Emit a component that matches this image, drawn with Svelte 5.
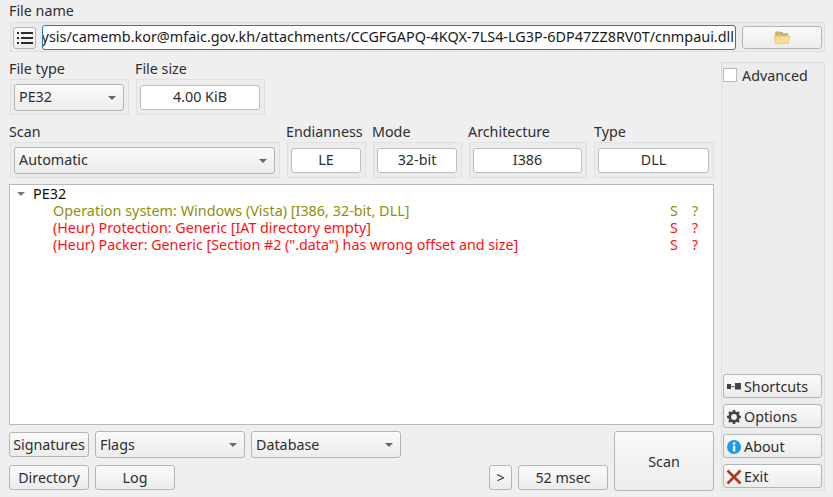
<script>
	const results = [
		{ text: 'Operation system: Windows (Vista) [I386, 32-bit, DLL]', kind: 'os' },
		{ text: '(Heur) Protection: Generic [IAT directory empty]', kind: 'heur' },
		{ text: '(Heur) Packer: Generic [Section #2 (".data") has wrong offset and size]', kind: 'heur' }
	];
	const infoFields = [
		{ label: 'Endianness', value: 'LE', cls: 'endian' },
		{ label: 'Mode', value: '32-bit', cls: 'mode' },
		{ label: 'Architecture', value: 'I386', cls: 'arch' },
		{ label: 'Type', value: 'DLL', cls: 'type' }
	];
</script>

<div class="window">
	<div class="label first">File name</div>
	<div class="group file-row">
		<button class="btn list-btn" aria-label="Menu">
			<svg width="16" height="14" viewBox="0 0 16 14">
				<g fill="#2a2a2a">
					<rect x="0" y="1" width="2" height="2" />
					<rect x="4" y="1" width="12" height="2" />
					<rect x="0" y="6" width="2" height="2" />
					<rect x="4" y="6" width="12" height="2" />
					<rect x="0" y="11" width="2" height="2" />
					<rect x="4" y="11" width="12" height="2" />
				</g>
			</svg>
		</button>
		<div class="path"><span>analysis/camemb.kor@mfaic.gov.kh/attachments/CCGFGAPQ-4KQX-7LS4-LG3P-6DP47ZZ8RV0T/cnmpaui.dll</span></div>
		<button class="btn folder-btn" aria-label="Open">
			<svg width="16" height="13" viewBox="0 0 16 13">
				<path d="M1 5 V1.5 L2 0.5 H6 L7 2 H14 V5 Z" fill="#d4b368" />
				<rect x="7" y="1" width="1.5" height="1" fill="#6aa5a0" />
				<path d="M0.4 5 H15.6 L14.4 12.6 H1.4 Z" fill="#f6de9a" stroke="#dcbc70" stroke-width="0.7" />
			</svg>
		</button>
	</div>

	<div class="body">
		<div class="main">
			<div class="info-row one">
				<div class="col filetype">
					<div class="label top">File type</div>
					<div class="group">
						<div class="combo">PE32<i class="arrow"></i></div>
					</div>
				</div>
				<div class="col filesize">
					<div class="label top">File size</div>
					<div class="group">
						<div class="field">4.00 KiB</div>
					</div>
				</div>
			</div>

			<div class="info-row two">
				<div class="col scan">
					<div class="label">Scan</div>
					<div class="group">
						<div class="combo">Automatic<i class="arrow"></i></div>
					</div>
				</div>
				{#each infoFields as f}
					<div class="col {f.cls}">
						<div class="label">{f.label}</div>
						<div class="group">
							<div class="field">{f.value}</div>
						</div>
					</div>
				{/each}
			</div>

			<div class="tree">
				<div class="tree-root"><i class="arrow"></i><span>PE32</span></div>
				{#each results as r}
					<div class="tree-item {r.kind}">
						<span class="tree-text">{r.text}</span>
						<span class="flag">S</span>
						<span class="flag">?</span>
					</div>
				{/each}
			</div>

			<div class="bottom">
				<div class="bottom-left">
					<div class="bottom-line">
						<button class="btn small">Signatures</button>
						<div class="combo bottom-combo">Flags<i class="arrow"></i></div>
						<div class="combo bottom-combo">Database<i class="arrow"></i></div>
					</div>
					<div class="bottom-line second">
						<button class="btn small">Directory</button>
						<button class="btn small">Log</button>
						<button class="btn more">&gt;</button>
						<button class="btn timer">52 msec</button>
					</div>
				</div>
				<button class="btn scan-btn">Scan</button>
			</div>
		</div>

		<div class="side">
			<label class="advanced"><i class="check"></i>Advanced</label>
			<div class="side-buttons">
				<button class="btn side-btn">
					<svg width="16" height="16" viewBox="0 0 16 16">
						<rect x="1" y="5" width="4" height="5" fill="#444" />
						<rect x="5.5" y="7" width="3" height="1.2" fill="#666" />
						<rect x="9" y="4" width="6" height="6.5" fill="#444" />
					</svg><span class="txt">Shortcuts</span>
				</button>
				<button class="btn side-btn">
					<svg width="16" height="16" viewBox="0 0 16 16">
						<circle cx="8" cy="8" r="4.3" fill="none" stroke="#444" stroke-width="2.8" />
						<path d="M8 1V3.5M8 12.5V15M1 8H3.5M12.5 8H15M3 3L4.8 4.8M11.2 11.2L13 13M13 3L11.2 4.8M4.8 11.2L3 13" stroke="#444" stroke-width="2.4" />
					</svg><span class="txt">Options</span>
				</button>
				<button class="btn side-btn">
					<svg width="16" height="16" viewBox="0 0 16 16">
						<circle cx="8" cy="8" r="7" fill="#1e9be0" />
						<rect x="6.9" y="6.8" width="2.4" height="5.6" fill="#fff" />
						<rect x="6.9" y="3.4" width="2.4" height="2.2" fill="#fff" />
					</svg><span class="txt">About</span>
				</button>
				<button class="btn side-btn">
					<svg width="16" height="16" viewBox="0 0 16 16">
						<path d="M1.5 1.5L14.5 14.5M14.5 1.5L1.5 14.5" stroke="#ad3a20" stroke-width="2.6" />
					</svg><span class="txt">Exit</span>
				</button>
			</div>
		</div>
	</div>
</div>

<style>
	:global(body) {
		background: #efefef;
	}

	.window {
		width: 833px;
		height: 497px;
		box-sizing: border-box;
		padding: 0 8px 0 9px;
		font-family: 'Noto Sans', sans-serif;
		font-size: 14.3px;
		color: #2e2e2e;
		overflow: hidden;
	}

	.label {
		height: 20px;
		line-height: 20px;
		white-space: nowrap;
	}

	.label.first {
		height: 22px;
		line-height: 22px;
	}

	.label.top {
		height: 17px;
		line-height: 13px;
	}

	.type .label {
		padding-left: 1px;
	}

	.group {
		box-sizing: border-box;
		margin-left: 1px;
		padding: 3px 4px 3px 3px;
		background: #ececec;
		border: 1px solid #e0e0e0;
		display: flex;
		align-items: center;
	}

	.file-row {
		height: 30px;
		gap: 6px;
		padding: 0 2px;
	}

	.btn {
		box-sizing: border-box;
		font: inherit;
		color: inherit;
		padding: 0;
		background: linear-gradient(#fafafa, #ececec);
		border: 1px solid #b4b4b4;
		border-radius: 3px;
		height: 25px;
	}

	.list-btn {
		width: 23px;
		height: 22px;
		display: flex;
		align-items: center;
		justify-content: center;
		margin-top: 1px;
	}

	.path {
		box-sizing: border-box;
		width: 694px;
		height: 25px;
		line-height: 22px;
		font-size: 14.4px;
		background: #fff;
		border: 1px solid #2b78ab;
		border-radius: 3px;
		padding: 0 1px;
		overflow: hidden;
		display: flex;
		justify-content: flex-end;
		white-space: nowrap;
		color: #1a1a1a;
	}

	.folder-btn {
		width: 80px;
		height: 23px;
		display: flex;
		align-items: center;
		justify-content: center;
	}

	.body {
		display: flex;
		margin-top: 10px;
		gap: 7px;
	}

	.main {
		width: 705px;
	}

	.info-row {
		display: flex;
		gap: 6px;
	}

	.info-row.two {
		margin-top: 7px;
	}

	.filetype { width: 120px; }
	.filesize { width: 130px; }
	.scan { width: 271px; }
	.endian { width: 80px; }
	.mode { width: 90px; }
	.arch { width: 119px; }
	.type { width: 121px; }

	.col .group {
		height: 36px;
	}

	.combo {
		box-sizing: border-box;
		flex: 1;
		height: 27px;
		line-height: 23px;
		padding-left: 4px;
		background: linear-gradient(#fafafa, #ececec);
		border: 1px solid #b4b4b4;
		border-radius: 3px;
		position: relative;
	}

	.arrow {
		width: 0;
		height: 0;
		border-left: 4px solid transparent;
		border-right: 4px solid transparent;
		border-top: 4px solid #666;
	}

	.combo .arrow {
		position: absolute;
		right: 7px;
		top: 11px;
	}

	.field {
		box-sizing: border-box;
		flex: 1;
		height: 25px;
		line-height: 21px;
		text-align: center;
		background: #fff;
		border: 1px solid #bcbcbc;
		border-radius: 3px;
	}

	.tree {
		box-sizing: border-box;
		height: 241px;
		margin-top: 6px;
		background: #fff;
		border: 1px solid #b9b9b9;
		font-size: 14.4px;
		line-height: 17px;
	}

	.tree-root {
		display: flex;
		align-items: center;
		padding-left: 7px;
		color: #111;
		height: 17px;
	}

	.tree-root .arrow {
		border-top-color: #777;
	}

	.tree-root span {
		margin-left: 8px;
	}

	.tree-item {
		display: flex;
		height: 17px;
		padding-left: 43px;
	}

	.tree-text {
		flex: none;
		width: 617px;
		white-space: nowrap;
	}

	.flag {
		flex: none;
		width: 22px;
	}

	.os { color: #8f8f08; }
	.heur { color: #ff0f0f; font-size: 14.28px; }

	.bottom {
		display: flex;
		gap: 6px;
		margin-top: 6px;
	}

	.bottom-left {
		width: 599px;
	}

	.bottom-line {
		display: flex;
		gap: 6px;
		align-items: center;
	}

	.bottom-line.second {
		margin-top: 7px;
	}

	.small {
		width: 80px;
		white-space: nowrap;
	}

	.bottom-combo {
		flex: none;
		width: 150px;
		line-height: 25px;
	}

	.more {
		width: 23px;
		margin-left: auto;
	}

	.timer {
		width: 90px;
	}

	.scan-btn {
		width: 100px;
		height: 60px;
	}

	.side {
		box-sizing: border-box;
		width: 104px;
		height: 429px;
		background: #ececec;
		border: 1px solid #e0e0e0;
		padding: 5px 1px 2px;
		display: flex;
		flex-direction: column;
		justify-content: space-between;
	}

	.advanced {
		display: flex;
		align-items: center;
		gap: 5px;
		height: 14px;
	}

	.check {
		box-sizing: border-box;
		width: 14px;
		height: 14px;
		background: #fff;
		border: 1px solid #b9b9b9;
	}

	.side-buttons {
		display: flex;
		flex-direction: column;
		gap: 6px;
	}

	.side-btn {
		width: 99px;
		height: 24px;
		display: flex;
		align-items: center;
		gap: 2px;
		padding-left: 2px;
	}

	.side-btn svg {
		margin-top: 1px;
	}

	.txt {
		padding-top: 1px;
	}
</style>
